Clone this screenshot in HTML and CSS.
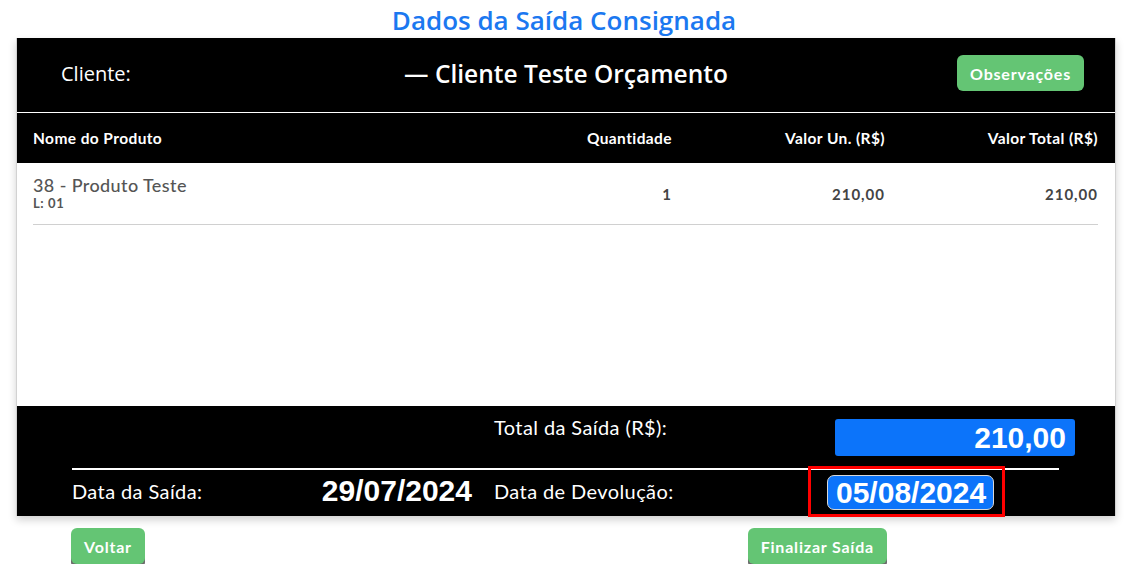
FILE: index.html
```html
<!DOCTYPE html>
<html lang="pt-BR">
<head>
  <meta charset="UTF-8" />
  <meta name="viewport" content="width=device-width, initial-scale=1.0"/>
  <title>Dados da Saída Consignada</title>
  <link rel="stylesheet" href="styles.css">
</head>
<body>
  <h1 class="page-title">Dados da Saída Consignada</h1>

  <section class="card">
    <!-- Cliente -->
    <div class="card-head">
      <span class="client-label">Cliente:</span>
      <span class="client-name">— Cliente Teste Orçamento</span>
      <button class="btn btn-obs">Observações</button>
    </div>

    <!-- Produtos -->
    <div class="items-head">
      <span>Nome do Produto</span>
      <span class="num">Quantidade</span>
      <span class="num">Valor Un. (R$)</span>
      <span class="num">Valor Total (R$)</span>
    </div>
    <div class="items-body">
      <div class="item-row">
        <div class="item-name">
          <span class="prod">38 - Produto Teste</span>
          <span class="lot">L: 01</span>
        </div>
        <span class="num val">1</span>
        <span class="num val">210,00</span>
        <span class="num val">210,00</span>
      </div>
    </div>

    <!-- Totais -->
    <div class="card-foot">
      <span class="foot-label total-label">Total da Saída (R$):</span>
      <span class="total-box">210,00</span>
      <hr class="foot-line">
      <span class="foot-label lift">Data da Saída:</span>
      <span class="date lift">29/07/2024</span>
      <span class="foot-label lift">Data de Devolução:</span>
      <span class="date-pill">05/08/2024</span>
    </div>
  </section>

  <div class="actions">
    <button class="btn btn-raised">Voltar</button>
    <button class="btn btn-raised">Finalizar Saída</button>
  </div>
</body>
</html>
```

FILE: styles.css
```css
body { margin: 0; font-family: Lato, "Open Sans", sans-serif; background: #fff; }

.page-title {
  margin: 0;
  height: 38px;
  line-height: 40px;
  text-align: center;
  font-family: "Open Sans", sans-serif;
  font-weight: 600;
  font-size: 26px;
  color: #1b78f0;
}

.card {
  width: 1098px;
  margin-left: 16px;
  border: 1px solid #d2d2d2;
  border-top: 0;
  border-bottom: 0;
  box-shadow: 0 4px 8px rgba(0, 0, 0, 0.18);
}

/* header */
.card-head {
  display: grid;
  grid-template-columns: 1fr auto 1fr;
  align-items: center;
  height: 70px;
  padding: 0 31px 4px 31px;
  background: #000;
  color: #fff;
  border-bottom: 1px solid #fff;
}
.client-label { margin-left: 13px; font-family: "Open Sans", sans-serif; font-size: 20px; }
.client-name { font-family: "Open Sans", sans-serif; font-weight: 600; font-size: 24.5px; }
.btn-obs { justify-self: end; }

.btn {
  border: 0;
  border-radius: 6px;
  background: #64c574;
  color: #fff;
  font-family: Lato, sans-serif;
  font-weight: 700;
  font-size: 16px;
  letter-spacing: 0.8px;
  height: 36px;
  padding: 0 13px;
}

/* products */
.items-head, .item-row {
  display: grid;
  grid-template-columns: 1fr 213px 213px 213px;
  align-items: center;
}
.items-head {
  height: 50px;
  padding: 0 17px 0 16px;
  background: #000;
  color: #fff;
  font-weight: 700;
  font-size: 15.5px;
  letter-spacing: 0.4px;
}
.num { text-align: right; }

.items-body {
  height: 243px;
  padding: 0 17px 0 16px;
  background: #fff;
}
.item-row {
  padding: 12px 0 13px;
  border-bottom: 1px solid #d0d0d0;
  color: #555;
}
.item-name { display: flex; flex-direction: column; }
.prod { font-size: 18px; font-weight: 500; letter-spacing: 0.4px; line-height: 21px; }
.lot { font-size: 13px; font-weight: 700; letter-spacing: 0.6px; line-height: 15px; }
.val { font-weight: 700; font-size: 15px; letter-spacing: 1px; color: #444; margin-top: 2px; }

/* totals */
.card-foot {
  display: grid;
  grid-template-columns: 228px 150px 292px 1fr;
  column-gap: 22px;
  align-items: center;
  height: 110px;
  box-sizing: border-box;
  padding: 13px 40px 0 55px;
  background: #000;
  color: #fff;
}
.foot-label { font-size: 20px; letter-spacing: 0.4px; }
.total-label { grid-column: 3; align-self: start; margin-top: -4px; }
.lift { margin-bottom: 4px; }
.total-box {
  grid-column: 4;
  margin-left: 27px;
  width: 240px;
  height: 37px;
  box-sizing: border-box;
  padding-right: 9px;
  border-radius: 3px;
  background: #0c74fa;
  font-family: "Liberation Sans", Arial, sans-serif;
  font-weight: 700;
  font-size: 30px;
  line-height: 37px;
  text-align: right;
}
.foot-line {
  grid-column: 1 / -1;
  width: 987px;
  margin: 12px 0 0;
  border: 0;
  border-top: 2px solid #fff;
}
.date {
  justify-self: end;
  font-family: "Liberation Sans", Arial, sans-serif;
  font-weight: 700;
  font-size: 30px;
}
.date-pill {
  position: relative;
  justify-self: start;
  margin: 5px 0 6px 19px;
  height: 35px;
  box-sizing: border-box;
  padding: 0 7px 0 8px;
  border: 1px solid #d8d8d8;
  border-radius: 7px;
  background: #0c74fa;
  font-family: "Liberation Sans", Arial, sans-serif;
  font-weight: 700;
  font-size: 30px;
  line-height: 33px;
}
/* destaque vermelho */
.date-pill::after {
  content: "";
  position: absolute;
  left: -20px;
  right: -12px;
  top: -10px;
  bottom: -8px;
  border: 3px solid #f00;
}

.actions {
  display: flex;
  justify-content: space-between;
  padding: 12px 241px 0 71px;
}
.btn-raised {
  height: 36px;
  box-shadow: 0 4px 0 #6c6c6c;
}
```
